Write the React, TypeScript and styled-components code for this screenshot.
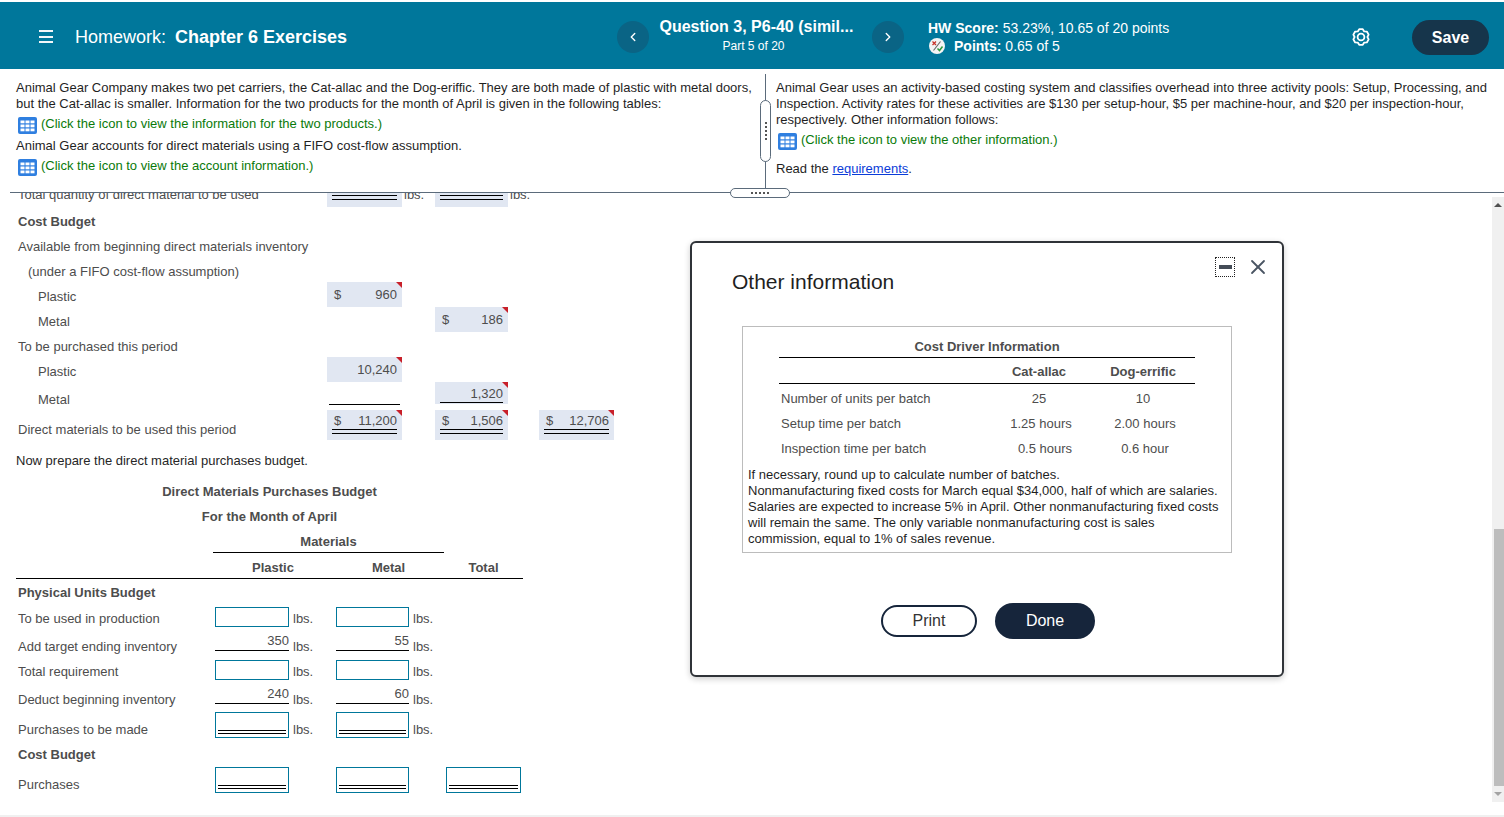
import React, { FC } from 'react';
import styled, { createGlobalStyle } from 'styled-components';
import { ChevronLeft, ChevronRight, X } from 'lucide-react';

const GlobalStyle = createGlobalStyle`
   html, body {
      margin: 0;
      padding: 0;
      height: 817px;
      overflow: hidden;
      background: #fff;
      font-family: 'Liberation Sans', Arial, sans-serif;
      font-size: 13px;
      color: #1a1a1a;
   }
`;

const GridIcon: FC = () => (
   <IconSvg viewBox="0 0 19 17" width="19" height="17">
      <rect x="0" y="0" width="19" height="17" rx="2" fill="#2f7fe0" />
      {[2.5, 7.5, 12.5].map((x) =>
         [3.5, 7.5, 11.5].map((y) => (
            <rect key={`${x}-${y}`} x={x} y={y} width="4" height="2.8" fill="#fff" />
         )),
      )}
   </IconSvg>
);

const PointsIcon: FC = () => (
   <svg viewBox="0 0 16 16" width="16" height="16">
      <circle cx="8" cy="8" r="8" fill="#f4f4f4" />
      <path d="M11.5 3.5 L4.5 12.5" stroke="#666" strokeWidth="1.1" />
      <path d="M3.5 3.5 L7 7 M7 3.5 L3.5 7" stroke="#c8342c" strokeWidth="1.3" />
      <path d="M8.5 10.5 L10.5 12.5 L13.5 8.5" stroke="#2f9a3c" strokeWidth="1.5" fill="none" />
   </svg>
);

const gearPoints = Array.from({ length: 6 }, (_, i) => {
   const at = (deg: number, r: number) => {
      const a = ((i * 60 + deg - 90) * Math.PI) / 180;
      return `${(9 + r * Math.cos(a)).toFixed(2)},${(9 + r * Math.sin(a)).toFixed(2)}`;
   };
   return [at(-13, 8), at(13, 8), at(30, 6.4)].join(' ');
}).join(' ');

const GearIcon: FC = () => (
   <svg viewBox="0 0 18 18" width="18" height="18" fill="none" stroke="#fff" strokeWidth="1.8" strokeLinejoin="round">
      <polygon points={gearPoints} />
      <circle cx="9" cy="9" r="3.4" />
   </svg>
);

const Question = () => (
   <InfoBar>
      <InfoLeft>
         <Para>
            Animal Gear Company makes two pet carriers, the Cat-allac and the Dog-eriffic. They are both made of
            plastic with metal doors, but the Cat-allac is smaller. Information for the two products for the month
            of April is given in the following tables:
         </Para>
         <IconLine $top={3}>
            <GridIcon />
            <Green>(Click the icon to view the information for the two products.)</Green>
         </IconLine>
         <Para $top={5}>Animal Gear accounts for direct materials using a FIFO cost-flow assumption.</Para>
         <IconLine $top={3}>
            <GridIcon />
            <Green>(Click the icon to view the account information.)</Green>
         </IconLine>
      </InfoLeft>
      <Divider>
         <VerticalGrip>
            <GripDots $vertical />
         </VerticalGrip>
      </Divider>
      <InfoRight>
         <Para>
            Animal Gear uses an activity-based costing system and classifies overhead into three activity pools:
            Setup, Processing, and Inspection. Activity rates for these activities are $130 per setup-hour, $5 per
            machine-hour, and $20 per inspection-hour, respectively. Other information follows:
         </Para>
         <IconLine $top={3}>
            <GridIcon />
            <Green>(Click the icon to view the other information.)</Green>
         </IconLine>
         <Para $top={12}>
            Read the <ReqLink href="#">requirements</ReqLink>.
         </Para>
      </InfoRight>
      <HorizontalGrip>
         <GripDots />
      </HorizontalGrip>
   </InfoBar>
);

const CostBudget = () => (
   <>
      <UpperRow $h={28}>
         <Label $pb={5}>Total quantity of direct material to be used</Label>
         <ClippedAnswer $col={2} $line="double" />
         <ClippedUnit $col={3}>lbs.</ClippedUnit>
         <ClippedAnswer $col={4} $line="double" />
         <ClippedUnit $col={5}>lbs.</ClippedUnit>
      </UpperRow>
      <UpperRow $h={25}>
         <Label $bold $pb={3}>Cost Budget</Label>
      </UpperRow>
      <UpperRow $h={25}>
         <Label $pb={3}>Available from beginning direct materials inventory</Label>
      </UpperRow>
      <UpperRow $h={24}>
         <Label $indent={10} $pb={2}>(under a FIFO cost-flow assumption)</Label>
      </UpperRow>
      <UpperRow $h={25}>
         <Label $indent={20} $pb={2}>Plastic</Label>
         <Answer $col={2}>
            <span>$</span>
            <span>960</span>
         </Answer>
      </UpperRow>
      <UpperRow $h={25}>
         <Label $indent={20} $pb={2}>Metal</Label>
         <Answer $col={4}>
            <span>$</span>
            <span>186</span>
         </Answer>
      </UpperRow>
      <UpperRow $h={25}>
         <Label $pb={2}>To be purchased this period</Label>
      </UpperRow>
      <UpperRow $h={25}>
         <Label $indent={20} $pb={2}>Plastic</Label>
         <Answer $col={2}>
            <span />
            <span>10,240</span>
         </Answer>
      </UpperRow>
      <UpperRow $h={28}>
         <Label $indent={20} $pb={2}>Metal</Label>
         <BlankLine $col={2} />
         <Answer $col={4} $line="single">
            <span />
            <span>1,320</span>
         </Answer>
      </UpperRow>
      <UpperRow $h={30}>
         <Label $pb={2}>Direct materials to be used this period</Label>
         <TotalAnswer $col={2} $line="double">
            <span>$</span>
            <span>11,200</span>
         </TotalAnswer>
         <TotalAnswer $col={4} $line="double">
            <span>$</span>
            <span>1,506</span>
         </TotalAnswer>
         <TotalAnswer $col={6} $line="double">
            <span>$</span>
            <span>12,706</span>
         </TotalAnswer>
      </UpperRow>
   </>
);

const PurchasesBudget = () => (
   <>
      <Instruction>Now prepare the direct material purchases budget.</Instruction>
      <BudgetTitle>Direct Materials Purchases Budget</BudgetTitle>
      <BudgetTitle>For the Month of April</BudgetTitle>
      <MaterialsRow>
         <MaterialsHead>Materials</MaterialsHead>
      </MaterialsRow>
      <HeadRow>
         <span />
         <HeadCell>Plastic</HeadCell>
         <HeadCell>Metal</HeadCell>
         <HeadCell>Total</HeadCell>
      </HeadRow>
      <LowerRow $h={26}>
         <Label $bold>Physical Units Budget</Label>
      </LowerRow>
      <LowerRow $h={26}>
         <Label>To be used in production</Label>
         <InputBox $col={2} $h={20} />
         <Lbs $col={3}>lbs.</Lbs>
         <InputBox $col={4} $h={20} />
         <Lbs $col={5}>lbs.</Lbs>
      </LowerRow>
      <LowerRow $h={27}>
         <Label $pb={3}>Add target ending inventory</Label>
         <Given $col={2}>350</Given>
         <Lbs $col={3} $pb={3}>lbs.</Lbs>
         <Given $col={4}>55</Given>
         <Lbs $col={5} $pb={3}>lbs.</Lbs>
      </LowerRow>
      <LowerRow $h={26}>
         <Label>Total requirement</Label>
         <InputBox $col={2} $h={20} />
         <Lbs $col={3}>lbs.</Lbs>
         <InputBox $col={4} $h={20} />
         <Lbs $col={5}>lbs.</Lbs>
      </LowerRow>
      <LowerRow $h={27}>
         <Label $pb={3}>Deduct beginning inventory</Label>
         <Given $col={2}>240</Given>
         <Lbs $col={3} $pb={3}>lbs.</Lbs>
         <Given $col={4}>60</Given>
         <Lbs $col={5} $pb={3}>lbs.</Lbs>
      </LowerRow>
      <LowerRow $h={30}>
         <Label $pb={3}>Purchases to be made</Label>
         <InputBox $col={2} $h={26} $double />
         <Lbs $col={3} $pb={3}>lbs.</Lbs>
         <InputBox $col={4} $h={26} $double />
         <Lbs $col={5} $pb={3}>lbs.</Lbs>
      </LowerRow>
      <LowerRow $h={25}>
         <Label $bold $pb={3}>Cost Budget</Label>
      </LowerRow>
      <LowerRow $h={30}>
         <Label $pb={3}>Purchases</Label>
         <InputBox $col={2} $h={26} $double />
         <InputBox $col={4} $h={26} $double />
         <InputBox $col={6} $h={26} $double />
      </LowerRow>
   </>
);

const OtherInfoDialog = () => (
   <Dialog>
      <DialogControls>
         <MinimizeBox>
            <MinimizeBar />
         </MinimizeBox>
         <CloseButton>
            <X size={24} strokeWidth={1.8} />
         </CloseButton>
      </DialogControls>
      <DialogTitle>Other information</DialogTitle>
      <InfoFrame>
         <DriverTable>
            <thead>
               <tr>
                  <CaptionCell colSpan={3}>Cost Driver Information</CaptionCell>
               </tr>
               <tr>
                  <ColumnHead />
                  <ColumnHead>Cat-allac</ColumnHead>
                  <ColumnHead>Dog-errific</ColumnHead>
               </tr>
            </thead>
            <tbody>
               <tr>
                  <DriverLabel>Number of units per batch</DriverLabel>
                  <DriverValue>25</DriverValue>
                  <DriverValue>10</DriverValue>
               </tr>
               <tr>
                  <DriverLabel>Setup time per batch</DriverLabel>
                  <DriverValue $pad={4}>1.25 hours</DriverValue>
                  <DriverValue $pad={4}>2.00 hours</DriverValue>
               </tr>
               <tr>
                  <DriverLabel>Inspection time per batch</DriverLabel>
                  <DriverValue $pad={12}>0.5 hours</DriverValue>
                  <DriverValue $pad={4}>0.6 hour</DriverValue>
               </tr>
            </tbody>
         </DriverTable>
         <FrameNote>
            If necessary, round up to calculate number of batches.
            <br />
            Nonmanufacturing fixed costs for March equal $34,000, half of which are salaries.
            <br />
            Salaries are expected to increase 5% in April. Other nonmanufacturing fixed costs
            <br />
            will remain the same. The only variable nonmanufacturing cost is sales
            <br />
            commission, equal to 1% of sales revenue.
         </FrameNote>
      </InfoFrame>
      <DialogButtons>
         <PrintButton>Print</PrintButton>
         <DoneButton>Done</DoneButton>
      </DialogButtons>
   </Dialog>
);

const App: FC = () => (
   <>
      <GlobalStyle />
      <Page>
         <Header>
            <MenuLines>
               <i />
               <i />
               <i />
            </MenuLines>
            <HeaderTitle>
               Homework: <b>Chapter 6 Exercises</b>
            </HeaderTitle>
            <QuestionNav>
               <NavButton>
                  <ChevronLeft size={14} strokeWidth={2.4} />
               </NavButton>
               <QuestionName>
                  <strong>Question 3, P6-40 (simil...</strong>
                  <small>Part 5 of 20</small>
               </QuestionName>
               <NavButton>
                  <ChevronRight size={14} strokeWidth={2.4} />
               </NavButton>
            </QuestionNav>
            <Score>
               <div>
                  <b>HW Score:</b> 53.23%, 10.65 of 20 points
               </div>
               <PointsLine>
                  <PointsIcon />
                  <span>
                     <b>Points:</b> 0.65 of 5
                  </span>
               </PointsLine>
            </Score>
            <GearButton>
               <GearIcon />
            </GearButton>
            <SaveButton>Save</SaveButton>
         </Header>
         <Question />
         <Content>
            <Worksheet>
               <CostBudget />
               <PurchasesBudget />
            </Worksheet>
            <ScrollBar>
               <ScrollArrow $up />
               <ScrollTrack>
                  <ScrollThumb />
               </ScrollTrack>
               <ScrollArrow />
            </ScrollBar>
            <OtherInfoDialog />
         </Content>
      </Page>
   </>
);

const Page = styled.div`
   width: 1504px;
   height: 817px;
   display: flex;
   flex-direction: column;
   padding-top: 2px;
   box-sizing: border-box;
   overflow: hidden;
   border-bottom: 2px solid #f0f0f0;
`;

const Header = styled.header`
   height: 67px;
   flex: none;
   box-sizing: border-box;
   display: flex;
   align-items: center;
   background: #00779b;
   color: #fff;
   padding: 2px 15px 0 39px;
`;

const MenuLines = styled.div`
   width: 14px;
   display: flex;
   flex-direction: column;
   gap: 3.5px;
   margin-right: 22px;

   i {
      display: block;
      height: 2px;
      background: #f2f7f9;
   }
`;

const HeaderTitle = styled.div`
   width: 542px;
   font-size: 18px;
   margin-top: 2px;

   b {
      margin-left: 4px;
   }
`;

const QuestionNav = styled.div`
   display: flex;
   align-items: center;
   width: 311px;
`;

const NavButton = styled.div`
   width: 32px;
   height: 32px;
   flex: none;
   border-radius: 50%;
   background: #0a6485;
   color: #fff;
   display: flex;
   align-items: center;
   justify-content: center;
`;

const QuestionName = styled.div`
   width: 223px;
   box-sizing: border-box;
   padding-right: 8px;
   display: flex;
   flex-direction: column;
   align-items: center;
   gap: 3px;
   margin-top: -2px;

   strong {
      font-size: 16px;
      width: 194px;
      white-space: nowrap;
   }

   small {
      font-size: 12px;
      margin-right: 6px;
   }
`;

const Score = styled.div`
   width: 424px;
   font-size: 14px;
   display: flex;
   flex-direction: column;
   gap: 2px;
`;

const PointsLine = styled.div`
   display: flex;
   align-items: center;
   gap: 9px;
   padding-left: 1px;
`;

const GearButton = styled.div`
   width: 18px;
   height: 18px;
   margin-right: 42px;
`;

const SaveButton = styled.div`
   width: 77px;
   height: 35px;
   margin-top: 2px;
   border-radius: 18px;
   background: #16354b;
   font-size: 16px;
   font-weight: 700;
   display: flex;
   align-items: center;
   justify-content: center;
`;

const InfoBar = styled.section`
   position: relative;
   height: 124px;
   flex: none;
   display: grid;
   grid-template-columns: 765px 1px 1fr;
   line-height: 16px;
   color: #1f1f1f;
   &::after {
      content: '';
      position: absolute;
      left: 10px;
      right: 0;
      bottom: 0;
      height: 1px;
      background: #5b6b7b;
   }
`;

const InfoLeft = styled.div`
   padding: 11px 12px 0 16px;
`;

const InfoRight = styled.div`
   padding: 11px 14px 0 10px;
`;

const Para = styled.div<{ $top?: number }>`
   margin-top: ${({ $top }) => $top ?? 0}px;
`;

const IconLine = styled.div<{ $top?: number }>`
   display: flex;
   align-items: center;
   gap: 4px;
   height: 18px;
   margin-top: ${({ $top }) => $top ?? 0}px;
   padding-left: 2px;
`;

const IconSvg = styled.svg`
   flex: none;
   margin-top: 2px;
`;

const Green = styled.span`
   color: #0a7a0a;
`;

const ReqLink = styled.a`
   color: #0a3cd8;
`;

const Divider = styled.div`
   position: relative;
   margin: 5px 0 0;
   background: #5b6b7b;
`;

const VerticalGrip = styled.div`
   position: absolute;
   left: -5px;
   top: 26px;
   width: 9px;
   height: 60px;
   border: 1px solid #5b6b7b;
   border-radius: 6px;
   background: #fff;
   display: flex;
   align-items: center;
   justify-content: center;
`;

const GripDots = styled.div<{ $vertical?: boolean }>`
   ${({ $vertical }) =>
      $vertical
         ? 'width: 2px; height: 18px; background: repeating-linear-gradient(to bottom, #555 0 2px, transparent 2px 4px);'
         : 'width: 18px; height: 2px; background: repeating-linear-gradient(to right, #555 0 2px, transparent 2px 4px);'}
`;

const HorizontalGrip = styled.div`
   position: absolute;
   left: 730px;
   bottom: -5px;
   z-index: 2;
   width: 58px;
   height: 8px;
   border: 1px solid #5b6b7b;
   border-radius: 6px;
   background: #fff;
   display: flex;
   align-items: center;
   justify-content: center;
`;

const Content = styled.div`
   position: relative;
   flex: 1;
   min-height: 0;
   display: flex;
`;

const Worksheet = styled.div`
   flex: 1;
   min-width: 0;
   overflow: hidden;
   padding-left: 16px;
   color: #4d4d4d;
   line-height: 16px;
`;

const UpperRow = styled.div<{ $h: number }>`
   display: grid;
   grid-template-columns: 311px 75px 33px 73px 31px 75px;
   height: ${({ $h }) => $h}px;

   &:first-child {
      margin-top: -13px;
   }
`;

const LowerRow = styled.div<{ $h: number }>`
   display: grid;
   grid-template-columns: 199px 74px 47px 73px 37px 75px;
   width: 505px;
   height: ${({ $h }) => $h}px;
`;

const Label = styled.div<{ $bold?: boolean; $indent?: number; $pb?: number }>`
   grid-column: 1;
   align-self: end;
   padding: 0 0 ${({ $pb }) => $pb ?? 4}px ${({ $indent }) => 2 + ($indent ?? 0)}px;
   white-space: nowrap;
   font-weight: ${({ $bold }) => ($bold ? 700 : 400)};
`;

const Answer = styled.div<{ $col: number; $line?: 'single' | 'double' }>`
   position: relative;
   grid-column: ${({ $col }) => $col};
   display: flex;
   justify-content: space-between;
   align-items: flex-start;
   box-sizing: border-box;
   height: ${({ $line }) => ($line === 'single' ? '22px' : 'auto')};
   padding: ${({ $line }) => ($line ? 4 : 5)}px 5px 0 7px;
   background: #e1e7f2;

   &::before {
      content: '';
      display: ${({ $line }) => ($line ? 'block' : 'none')};
      position: absolute;
      left: 5px;
      right: 5px;
      bottom: ${({ $line }) => ($line === 'double' ? 6 : 1)}px;
      height: ${({ $line }) => ($line === 'double' ? 3 : 0)}px;
      border-top: 1px solid #000;
      border-bottom: ${({ $line }) => ($line === 'double' ? '1px solid #000' : 'none')};
   }

   &::after {
      content: '';
      position: absolute;
      top: 0;
      right: 0;
      border-top: 6px solid #c8202a;
      border-left: 6px solid transparent;
   }
`;

const TotalAnswer = styled(Answer)`
   padding-top: 3px;
`;

const ClippedAnswer = styled(Answer)`
   margin-bottom: 1px;

   &::before {
      bottom: 7px;
   }
`;

const BlankLine = styled.div<{ $col: number }>`
   grid-column: ${({ $col }) => $col};
   align-self: end;
   margin: 0 2px 5px;
   height: 1px;
   background: #000;
`;

const Unit = styled.div<{ $col: number }>`
   grid-column: ${({ $col }) => $col};
   align-self: end;
   padding: 0 0 4px 2px;
`;

const ClippedUnit = styled(Unit)`
   padding-bottom: 5px;
`;

const Instruction = styled.div`
   height: 40px;
   line-height: 41px;
   color: #262626;
   margin-bottom: -1px;
`;

const BudgetTitle = styled.div`
   width: 507px;
   height: 25px;
   line-height: 25px;
   text-align: center;
   font-weight: 700;
`;

const MaterialsRow = styled.div`
   width: 507px;
   height: 24px;
   padding-left: 197px;
   box-sizing: border-box;
`;

const MaterialsHead = styled.div`
   width: 231px;
   height: 23px;
   line-height: 25px;
   text-align: center;
   font-weight: 700;
   border-bottom: 1px solid #000;
`;

const HeadRow = styled.div`
   width: 507px;
   height: 25px;
   display: grid;
   grid-template-columns: 197px 120px 111px 79px;
   border-bottom: 1px solid #000;
`;

const HeadCell = styled.div`
   text-align: center;
   font-weight: 700;
   line-height: 30px;
`;

const InputBox = styled.div<{ $col: number; $h: number; $double?: boolean }>`
   position: relative;
   grid-column: ${({ $col }) => $col};
   align-self: end;
   height: ${({ $h }) => $h}px;
   box-sizing: border-box;
   border: 1px solid #00779b;
   margin-bottom: ${({ $double }) => ($double ? 3 : 4)}px;
   background: #fff;

   &::after {
      content: '';
      display: ${({ $double }) => ($double ? 'block' : 'none')};
      position: absolute;
      left: 2px;
      right: 2px;
      bottom: 3px;
      height: 2px;
      border-top: 1px solid #000;
      border-bottom: 1px solid #000;
   }
`;

const Given = styled.div<{ $col: number }>`
   grid-column: ${({ $col }) => $col};
   align-self: end;
   margin-bottom: 7px;
   padding-bottom: 1px;
   text-align: right;
   border-bottom: 1px solid #000;
`;

const Lbs = styled.div<{ $col: number; $pb?: number }>`
   grid-column: ${({ $col }) => $col};
   align-self: end;
   padding: 0 0 ${({ $pb }) => $pb ?? 4}px 4px;
`;

const ScrollBar = styled.div`
   width: 12px;
   flex: none;
   margin: 4px 0 13px;
   background: #f0f0f0;
   display: flex;
   flex-direction: column;
`;

const ScrollArrow = styled.div<{ $up?: boolean }>`
   height: 16px;
   flex: none;
   display: flex;
   align-items: center;
   justify-content: center;

   &::before {
      content: '';
      border-left: 4px solid transparent;
      border-right: 4px solid transparent;
      border-bottom: ${({ $up }) => ($up ? '4px solid #505050' : 'none')};
      border-top: ${({ $up }) => ($up ? 'none' : '4px solid #a3a3a3')};
   }
`;

const ScrollTrack = styled.div`
   flex: 1;
   display: flex;
   flex-direction: column;
   justify-content: flex-end;
`;

const ScrollThumb = styled.div`
   height: 257px;
   margin-left: 2px;
   background: #bdbdbd;
`;

const Dialog = styled.div`
   position: absolute;
   left: 690px;
   top: 48px;
   width: 594px;
   height: 436px;
   box-sizing: border-box;
   border: 2px solid #2f3338;
   border-radius: 6px;
   background: #fff;
   box-shadow: 0 2px 6px rgba(0, 0, 0, 0.2);
   padding: 0 50px;
   display: flex;
   flex-direction: column;
   color: #1f1f1f;
`;

const DialogControls = styled.div`
   position: absolute;
   top: 12px;
   right: 12px;
   display: flex;
   align-items: center;
   gap: 11px;
`;

const MinimizeBox = styled.div`
   width: 18px;
   height: 18px;
   border: 1px dotted #222;
   display: flex;
   align-items: center;
   justify-content: center;
`;

const MinimizeBar = styled.div`
   width: 13px;
   height: 4px;
   background: #444c57;
`;

const CloseButton = styled.div`
   width: 24px;
   height: 24px;
   color: #4a5563;
`;

const DialogTitle = styled.h2`
   margin: 27px 0 0 -10px;
   font-size: 21px;
   line-height: 24px;
   font-weight: 400;
`;

const InfoFrame = styled.div`
   margin-top: 32px;
   width: 490px;
   height: 227px;
   box-sizing: border-box;
   border: 1px solid #bcbcbc;
   padding: 8px 5px 0;
`;

const DriverTable = styled.table`
   border-collapse: collapse;
   width: 416px;
   margin-left: 31px;
   color: #4d4d4d;
   font-size: 13px;
   line-height: 16px;
`;

const CaptionCell = styled.th`
   height: 22px;
   padding: 2px 0 0;
   box-sizing: border-box;
   font-weight: 700;
   text-align: center;
   border-bottom: 1px solid #000;
`;

const ColumnHead = styled.th`
   height: 26px;
   padding: 3px 0 0;
   box-sizing: border-box;
   font-weight: 700;
   text-align: center;
   border-bottom: 1px solid #000;
   &:first-child {
      width: 208px;
   }
   &:nth-child(2) {
      width: 104px;
   }
`;

const DriverLabel = styled.td`
   height: 25px;
   padding: 6px 0 0 2px;
   box-sizing: border-box;
`;

const DriverValue = styled.td<{ $pad?: number }>`
   text-align: center;
   padding: 6px 0 0 ${({ $pad }) => $pad ?? 0}px;
   box-sizing: border-box;
`;

const FrameNote = styled.div`
   margin-top: 9px;
   line-height: 16px;
`;

const DialogButtons = styled.div`
   margin-top: 50px;
   display: flex;
   align-items: center;
   justify-content: center;
   gap: 18px;
   padding-left: 2px;
   font-size: 16px;
`;

const PrintButton = styled.div`
   width: 96px;
   height: 32px;
   box-sizing: border-box;
   border: 2px solid #16253b;
   border-radius: 16px;
   display: flex;
   align-items: center;
   justify-content: center;
   color: #333;
`;

const DoneButton = styled.div`
   width: 100px;
   height: 36px;
   border-radius: 18px;
   background: #16253b;
   color: #fff;
   display: flex;
   align-items: center;
   justify-content: center;
`;

export default App;
